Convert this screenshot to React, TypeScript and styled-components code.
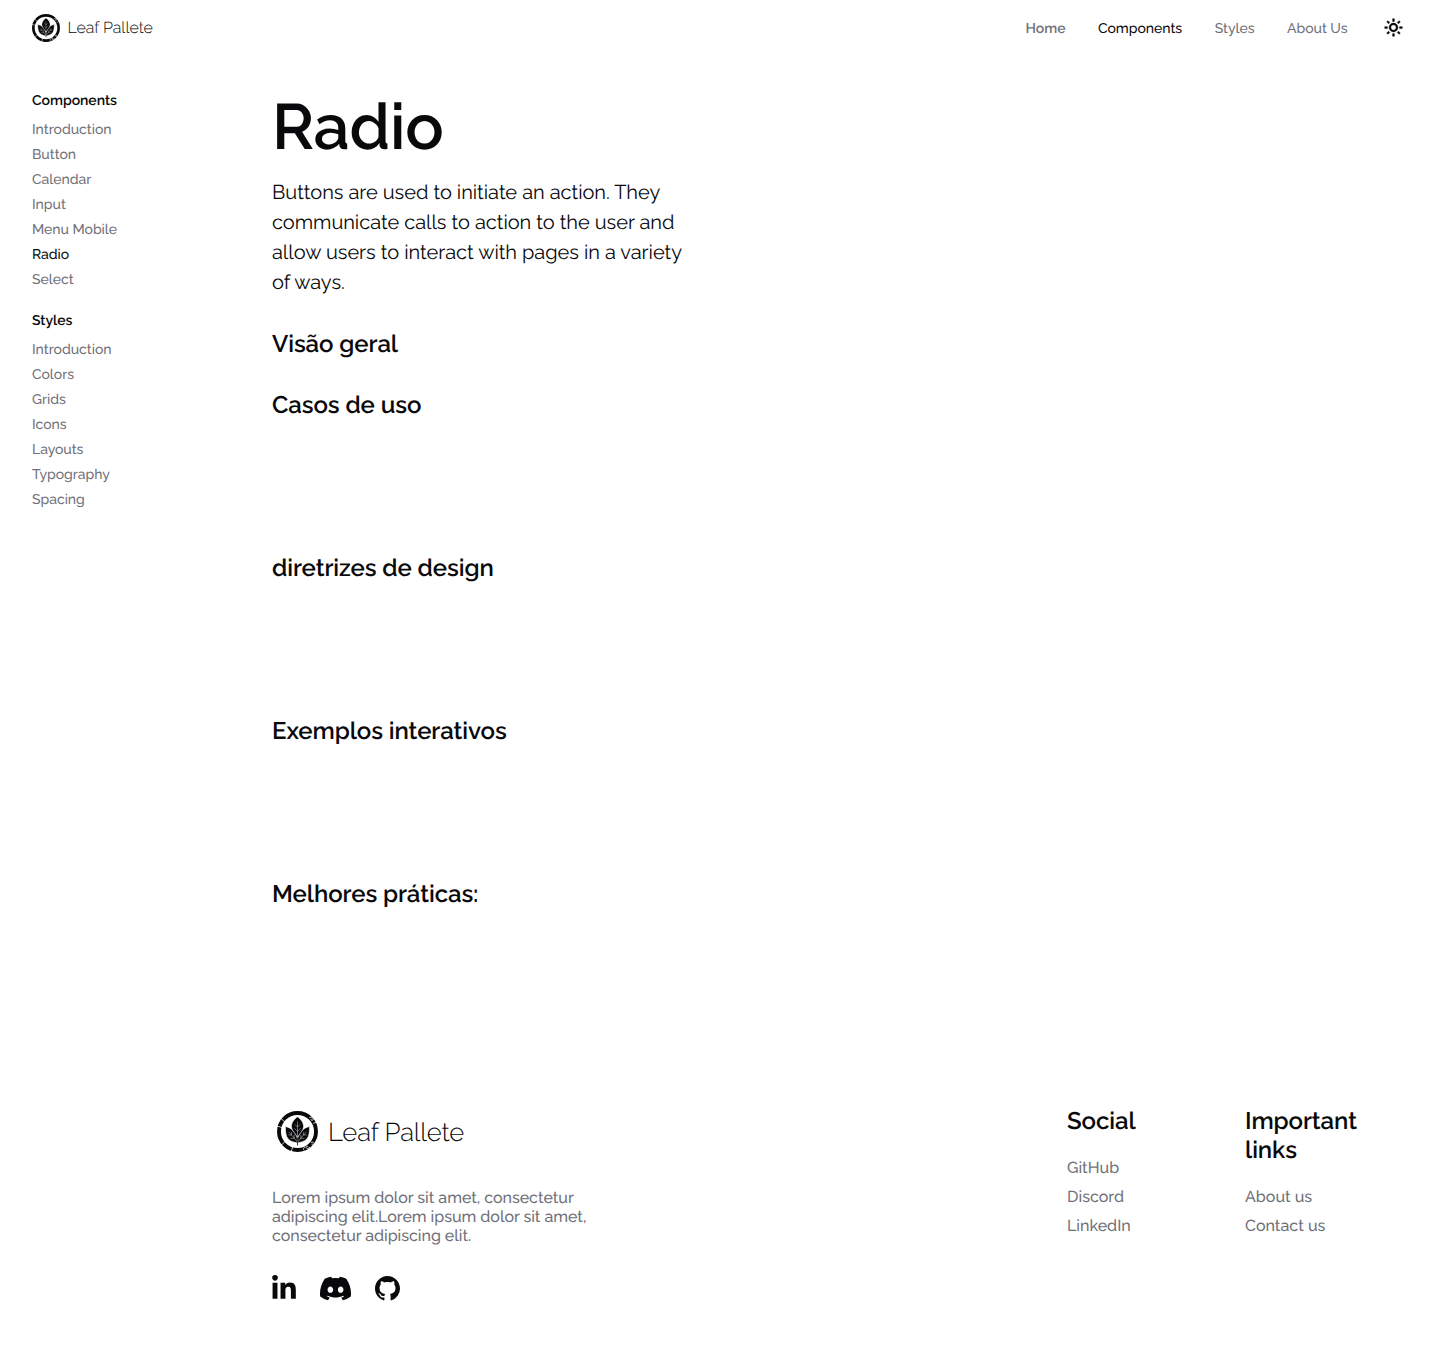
import React from 'react';
import styled, { createGlobalStyle } from 'styled-components';
import { BiSun } from 'react-icons/bi';
import { FaLinkedinIn } from 'react-icons/fa';
import { BsDiscord, BsGithub } from 'react-icons/bs';

const ink = '#09090b';
const muted = '#71717a';

const GlobalStyle = createGlobalStyle`
  *, *::before, *::after { box-sizing: border-box; }
  body {
    margin: 0;
    background: #fff;
    color: ${ink};
    font-family: Raleway, Lato, sans-serif;
    text-rendering: geometricPrecision;
  }
  h1, h2, h3, p, ul { margin: 0; padding: 0; }
  ul { list-style: none; }
  a { color: inherit; text-decoration: none; }
`;

const Page = styled.div`
  min-height: 1365px;
`;

const Header = styled.header`
  display: flex;
  align-items: center;
  justify-content: space-between;
  height: 56px;
  padding: 0 36px 0 32px;
`;

const Brand = styled.a<{ $large?: boolean }>`
  display: flex;
  align-items: center;
  gap: ${({ $large }) => ($large ? '10px' : '7.5px')};
  padding-left: ${({ $large }) => ($large ? '5px' : '0')};
  font-size: ${({ $large }) => ($large ? '25.6px' : '16px')};
  line-height: ${({ $large }) => ($large ? '51px' : '28px')};
  font-weight: 300;
  letter-spacing: ${({ $large }) => ($large ? '-0.13px' : '-0.06px')};

  svg {
    width: ${({ $large }) => ($large ? '41px' : '28px')};
    height: ${({ $large }) => ($large ? '41px' : '28px')};
  }
`;

const BrandName = styled.span<{ $large?: boolean }>`
  padding-top: ${({ $large }) => ($large ? '1px' : '0')};
  line-height: ${({ $large }) => ($large ? '50px' : '28px')};
`;

const Nav = styled.nav`
  display: flex;
  align-items: center;
  gap: 32.5px;
  font-size: 14px;
  line-height: 20px;
  letter-spacing: -0.03px;
`;

const NavLink = styled.a<{ $active?: boolean; $weight?: number }>`
  padding-top: 2px;
  color: ${({ $active }) => ($active ? ink : muted)};
  font-weight: ${({ $weight }) => $weight ?? 500};
`;

const ThemeButton = styled.button`
  display: flex;
  margin-left: 3px;
  padding: 0 0 1px;
  border: 0;
  background: none;
  color: #000;

  svg {
    stroke: currentColor;
    stroke-width: 0.5px;
  }
`;

const Body = styled.div`
  display: grid;
  grid-template-columns: 272px 1fr;
`;

const Sidebar = styled.aside`
  display: flex;
  flex-direction: column;
  gap: 24px;
  padding: 37px 0 0 32px;
  font-size: 14px;
  line-height: 17px;
  letter-spacing: -0.03px;
`;

const GroupTitle = styled.h3`
  margin-bottom: 12px;
  font-size: 14px;
  font-weight: 600;
`;

const GroupList = styled.ul`
  display: grid;
  gap: 8px;
`;

const SideLink = styled.a<{ $active?: boolean }>`
  color: ${({ $active }) => ($active ? ink : muted)};
  font-weight: 500;
`;

const Content = styled.main`
  padding-top: 32px;
`;

const Title = styled.h1`
  font-size: 64px;
  line-height: 77px;
  font-weight: 600;
  letter-spacing: -0.2px;
`;

const Lead = styled.p`
  width: 420px;
  margin: 12px 0 32px;
  font-size: 20px;
  line-height: 30px;
  font-weight: 400;
  letter-spacing: -0.035px;
`;

const Section = styled.section<{ $short?: boolean }>`
  height: ${({ $short }) => ($short ? '61px' : '163px')};
`;

const Heading = styled.h2`
  font-size: 24px;
  line-height: 29px;
  font-weight: 600;
  letter-spacing: -0.08px;
`;

const Footer = styled.footer`
  display: flex;
  justify-content: space-between;
  padding: 64px 67px 0 0;
`;

const About = styled.div`
  width: 330px;
`;

const Blurb = styled.p`
  margin: 31px 0 28px;
  color: ${muted};
  font-size: 16px;
  line-height: 19px;
  font-weight: 500;
  letter-spacing: -0.035px;
`;

const SocialIcons = styled.div`
  display: flex;
  align-items: center;
  gap: 24px;
`;

const SocialIcon = styled.a<{ $w: number; $h: number }>`
  display: flex;

  svg {
    width: ${({ $w }) => $w}px;
    height: ${({ $h }) => $h}px;
  }
`;

const LinkColumns = styled.div`
  display: grid;
  grid-template-columns: 178px 128px;
`;

const LinkList = styled.ul`
  display: grid;
  gap: 10px;
  margin-top: 23px;
  color: ${muted};
  font-size: 16px;
  line-height: 19px;
  font-weight: 500;
`;

function LeafMark() {
  return (
    <svg viewBox="0.4 0.4 41.2 41.2" fill="none" aria-hidden="true">
      <circle cx="21" cy="21" r="18.6" stroke={ink} strokeWidth="3.9" />
      <g stroke="#fff" strokeWidth="0.8" strokeLinecap="round">
        <path d="M0.5 15.5l4.6 1.5M4.8 8.3l3.3 2.9M5 34.5l3.2-3.2M14.8 40.6l1.4-4" />
        <path d="M33.2 6.8c1.8-1 3.9.4 3.5 2.1-.4 1.5-2.6 1.2-2.2-.2M37.2 12.7l2-.8" />
        <path d="M34.8 31.8c1.8-.8 3.6.8 3 2.4-.6 1.3-2.6.8-2.1-.6M33.2 36.8c-.9 1.8-3.1 1.8-3.7.2-.4-1.3 1.4-2 2-.8M27.5 39.7c-1-.7-.8-2.2.5-2.6" />
      </g>
      <g fill={ink} stroke="#fff" strokeWidth="0.6">
        <path d="M8.8 16c3.2.6 6.4 2.2 8.4 4.8 1.8 2.3 3.4 4.7 3.6 7.2v4.6c-2.8-.9-6.7-1.3-9.1-4-2.6-2.9-2.7-7.7-2.9-12.6z" />
        <path d="M33.2 16c-3.2.6-6.4 2.2-8.4 4.8-1.8 2.3-3.4 4.7-3.6 7.2v4.6c2.8-.9 6.7-1.3 9.1-4 2.6-2.9 2.7-7.7 2.9-12.6z" />
        <path d="M21 6.2c3.4 2.4 6.1 6 6.1 9.6 0 2.4-1.5 4.6-2.7 6.2-1.2 1.7-2.6 3.3-3.4 5-.8-1.7-2.2-3.3-3.4-5-1.2-1.6-2.7-3.8-2.7-6.2 0-3.6 2.7-7.2 6.1-9.6z" />
      </g>
      <g stroke="#fff" strokeWidth="0.4">
        <path d="M21 11v16M21 16.5l-2.6-2.6M21 16.5l2.6-2.6M21 21l-3.2-3.2M21 21l3.2-3.2" />
        <path d="M20.4 31l-8-9.5M29.6 21.5L21.6 31M15 24.6v-3M17.7 27.8v-3.5M15 24.6l-3.2-.2M17.7 27.8l-3.7.2M27 24.6v-3M24.3 27.8v-3.5M27 24.6l3.2-.2M24.3 27.8l3.7.2" />
      </g>
      <path d="M21 27v8" stroke={ink} strokeWidth="0.8" />
    </svg>
  );
}

const groups = [
  {
    title: 'Components',
    items: ['Introduction', 'Button', 'Calendar', 'Input', 'Menu Mobile', 'Radio', 'Select'],
  },
  {
    title: 'Styles',
    items: ['Introduction', 'Colors', 'Grids', 'Icons', 'Layouts', 'Typography', 'Spacing'],
  },
];

const sections = [
  'Visão geral',
  'Casos de uso',
  'diretrizes de design',
  'Exemplos interativos',
  'Melhores práticas:',
];

const footerLinks = [
  { title: 'Social', items: ['GitHub', 'Discord', 'LinkedIn'] },
  { title: 'Important links', items: ['About us', 'Contact us'] },
];

export default function App() {
  return (
    <Page>
      <GlobalStyle />
      <Header>
        <Brand href="#">
          <LeafMark />
          <BrandName>Leaf Pallete</BrandName>
        </Brand>
        <Nav>
          <NavLink href="#" $weight={600}>Home</NavLink>
          <NavLink href="#" $active>Components</NavLink>
          <NavLink href="#">Styles</NavLink>
          <NavLink href="#">About Us</NavLink>
          <ThemeButton aria-label="Toggle theme">
            <BiSun size={21} />
          </ThemeButton>
        </Nav>
      </Header>
      <Body>
        <Sidebar>
          {groups.map((group) => (
            <div key={group.title}>
              <GroupTitle>{group.title}</GroupTitle>
              <GroupList>
                {group.items.map((item) => (
                  <li key={item}>
                    <SideLink href="#" $active={item === 'Radio'}>{item}</SideLink>
                  </li>
                ))}
              </GroupList>
            </div>
          ))}
        </Sidebar>
        <Content>
          <Title>Radio</Title>
          <Lead>
            Buttons are used to initiate an action. They communicate calls to action to the user
            and allow users to interact with pages in a variety of ways.
          </Lead>
          {sections.map((name, i) => (
            <Section key={name} $short={i === 0}>
              <Heading>{name}</Heading>
            </Section>
          ))}
          <Footer>
            <About>
              <Brand href="#" $large>
                <LeafMark />
                <BrandName $large>Leaf Pallete</BrandName>
              </Brand>
              <Blurb>
                Lorem ipsum dolor sit amet, consectetur adipiscing elit.Lorem ipsum dolor sit amet,
                consectetur adipiscing elit.
              </Blurb>
              <SocialIcons>
                <SocialIcon href="#" aria-label="LinkedIn" $w={24} $h={27}><FaLinkedinIn /></SocialIcon>
                <SocialIcon href="#" aria-label="Discord" $w={31} $h={31}><BsDiscord /></SocialIcon>
                <SocialIcon href="#" aria-label="GitHub" $w={25} $h={25}><BsGithub /></SocialIcon>
              </SocialIcons>
            </About>
            <LinkColumns>
              {footerLinks.map((column) => (
                <div key={column.title}>
                  <Heading>{column.title}</Heading>
                  <LinkList>
                    {column.items.map((item) => (
                      <li key={item}><a href="#">{item}</a></li>
                    ))}
                  </LinkList>
                </div>
              ))}
            </LinkColumns>
          </Footer>
        </Content>
      </Body>
    </Page>
  );
}
